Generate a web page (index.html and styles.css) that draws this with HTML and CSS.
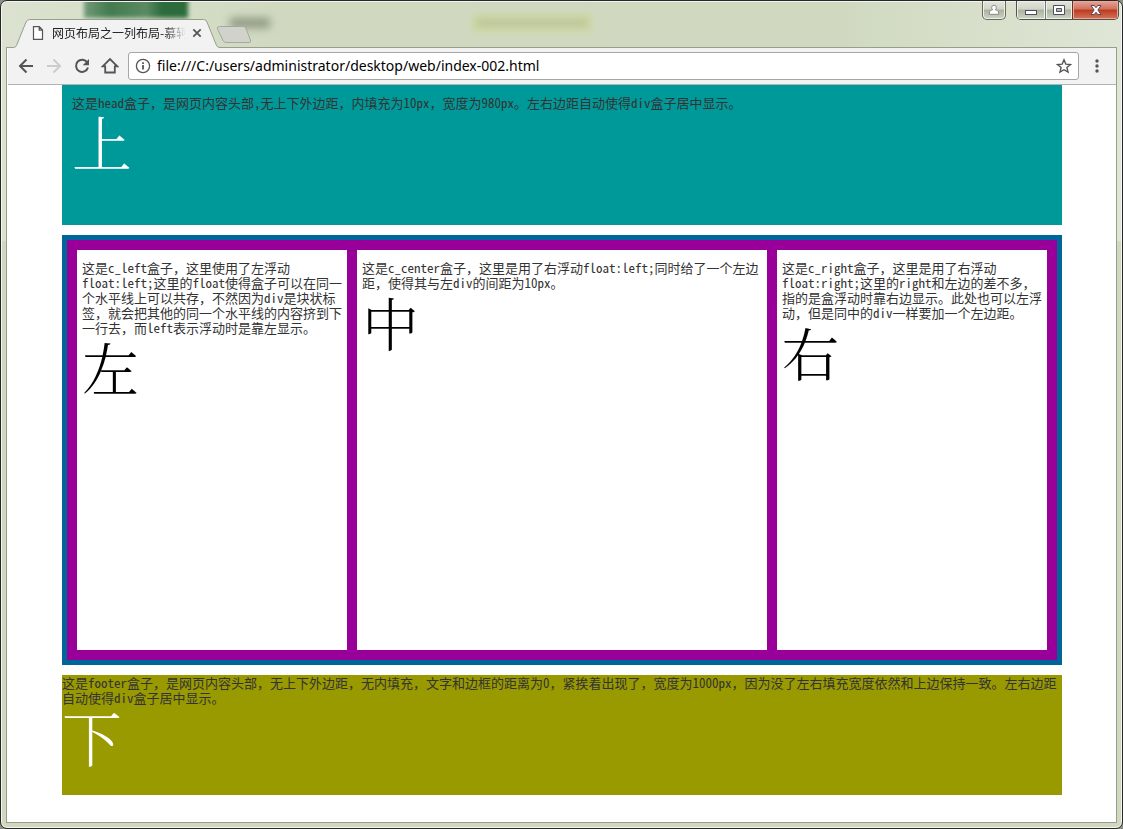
FILE: index.html
```html
<!DOCTYPE html>
<html lang="zh-CN">
<head>
<meta charset="utf-8">
<title>网页布局之一列布局</title>
<link rel="stylesheet" href="styles.css">
</head>
<body>
<div class="window">
  <div class="glass" aria-hidden="true">
    <span class="blur blur-green"></span>
    <span class="blur blur-dark"></span>
    <span class="blur blur-lime"></span>
  </div>

  <div class="controls">
    <button class="ctl ctl-user" aria-label="用户">
      <svg width="12" height="12" viewBox="0 0 12 12"><path d="M6 1.2a2.3 2.3 0 0 1 2.3 2.4c0 1-.5 1.8-1 2.2 1.800.4 3.400 1.200 3.400 3.200v1.300H1.300V9c0-2 1.600-2.800 3.400-3.200-.5-.4-1-1.200-1-2.200A2.300 2.300 0 0 1 6 1.200z" fill="#fff" stroke="#777" stroke-width=".8"/></svg>
    </button>
    <div class="ctl-group">
      <button class="ctl ctl-min" aria-label="最小化">
        <svg width="14" height="12" viewBox="0 0 14 12"><rect x="1.500" y="6.500" width="11" height="4" fill="#fff" stroke="#4b4f60"/></svg>
      </button>
      <button class="ctl ctl-max" aria-label="最大化">
        <svg width="14" height="12" viewBox="0 0 14 12"><path d="M1.500 1.500h11v9h-11zM4.500 4.500v3h5v-3z" fill="#fff" fill-rule="evenodd" stroke="#4b4f60"/></svg>
      </button>
      <button class="ctl ctl-close" aria-label="关闭">
        <svg width="14" height="12" viewBox="0 0 14 12"><path d="M2 1.500h3.200L7 3.700l1.800-2.200H12L8.900 6l3.100 4.500H8.800L7 8.300l-1.800 2.200H2L5.100 6z" fill="#fff" stroke="#5a4650"/></svg>
      </button>
    </div>
  </div>

  <div class="tabs">
    <div class="tab">
      <svg class="tab-shape" viewBox="0 0 208 29" width="208" height="29"><path d="M0 28.500h1.500q2 0 3-2L14 3q1.300-2.500 3.500-2.500h174Q194 .5 195 3l9.500 23.500q1 2 3.500 2V29H0z" fill="#f2f2f2"/><path d="M0 28.500h1.500q2 0 3-2L14 3q1.300-2.500 3.500-2.500h174Q194 .5 195 3l9.500 23.500q1 2 3.500 2" fill="none" stroke="#979e8c"/></svg>
      <svg class="tab-file" width="12" height="14" viewBox="0 0 12 14"><path d="M1.500 .7h5.800l3.200 3.300v9.300h-9zM7.200 .7v3.400h3.300" fill="#fff" stroke="#555" stroke-width="1.200"/></svg>
      <span class="tab-title">网页布局之一列布局-慕轲</span>
      <button class="tab-close" aria-label="关闭标签页"><svg width="10" height="10" viewBox="0 0 10 10"><path d="M1.300 1.300l7.400 7.400M8.700 1.300L1.300 8.700" stroke="#555" stroke-width="1.800"/></svg></button>
    </div>
    <button class="new-tab" aria-label="新标签页"><svg width="36" height="18" viewBox="0 0 36 18"><path d="M3.500 .5h23.500q2 0 3 2l4.500 11.500q.8 2.500-1.500 2.500H10q-2 0-3-2L1.500 3Q.5 .5 3.500 .5z" fill="#d0d2cb" stroke="#a3aa98"/></svg></button>
  </div>

  <div class="frame">
    <div class="toolbar">
      <button class="tool" aria-label="后退"><svg width="16" height="16" viewBox="0 0 16 16"><path d="M8.500 1.500L2 8l6.500 6.500M2 8h13" fill="none" stroke="#555" stroke-width="2"/></svg></button>
      <button class="tool" aria-label="前进" disabled><svg width="16" height="16" viewBox="0 0 16 16"><path d="M7.500 1.500L14 8l-6.500 6.500M14 8H1" fill="none" stroke="#ccc" stroke-width="2"/></svg></button>
      <button class="tool" aria-label="刷新"><svg width="16" height="16" viewBox="0 0 16 16"><path d="M13.300 4.500A6.100 6.100 0 1 0 14 9.500" fill="none" stroke="#555" stroke-width="2"/><path d="M15 1v6.300H8.700z" fill="#555"/></svg></button>
      <button class="tool" aria-label="主页"><svg width="18" height="18" viewBox="0 0 18 18"><path d="M1.700 9.300L9 2l7.300 7.300h-2.500v6.200H4.200V9.300z" fill="none" stroke="#555" stroke-width="1.800"/></svg></button>
      <div class="omnibox">
        <svg width="16" height="16" viewBox="0 0 16 16"><circle cx="8" cy="8" r="6.600" fill="none" stroke="#555" stroke-width="1.300"/><path d="M8 7v4.500M8 4.200v1.800" stroke="#555" stroke-width="1.800"/></svg>
        <input class="address" type="text" aria-label="地址" value="file:///C:/users/administrator/desktop/web/index-002.html">
        <button class="star" aria-label="收藏"><svg width="16" height="16" viewBox="0 0 16 16"><path d="M8 1.800l1.800 4.300 4.700.4-3.600 3 1.100 4.600L8 11.700l-4 2.400 1.100-4.600-3.600-3 4.700-.4z" fill="none" stroke="#555" stroke-width="1.400"/></svg></button>
      </div>
      <button class="tool" aria-label="菜单"><svg width="4" height="14" viewBox="0 0 4 14"><g fill="#555"><circle cx="2" cy="2" r="1.700"/><circle cx="2" cy="7" r="1.700"/><circle cx="2" cy="12" r="1.700"/></g></svg></button>
    </div>

    <main class="page">
      <header class="head">
        <p>这是head盒子，是网页内容头部,无上下外边距，内填充为10px，宽度为980px。左右边距自动使得div盒子居中显示。</p>
        <p class="big">上</p>
      </header>
      <section class="content">
        <div class="col">
          <p>这是c_left盒子，这里使用了左浮动<br>float:left;这里的float使得盒子可以在同一个水平线上可以共存，不然因为div是块状标签，就会把其他的同一个水平线的内容挤到下一行去，而left表示浮动时是靠左显示。</p>
          <p class="big">左</p>
        </div>
        <div class="col">
          <p>这是c_center盒子，这里是用了右浮动float:left;同时给了一个左边距，使得其与左div的间距为10px。</p>
          <p class="big">中</p>
        </div>
        <div class="col">
          <p>这是c_right盒子，这里是用了右浮动<br>float:right;这里的right和左边的差不多，指的是盒浮动时靠右边显示。此处也可以左浮动，但是同中的div一样要加一个左边距。</p>
          <p class="big">右</p>
        </div>
      </section>
      <footer class="footer">
        <p>这是footer盒子，是网页内容头部，无上下外边距，无内填充，文字和边框的距离为0，紧挨着出现了，宽度为1000px，因为没了左右填充宽度依然和上边保持一致。左右边距自动使得div盒子居中显示。</p>
        <p class="big">下</p>
      </footer>
    </main>
  </div>
</div>
</body>
</html>
```

FILE: styles.css
```css
* {
  box-sizing: border-box;
}

body {
  margin: 0;
  background: #8a8f86;
  color: #333;
  font: 13px/15px "Noto Sans Mono CJK SC", "Noto Sans CJK SC", sans-serif;
}

p {
  margin: 0;
}

button {
  display: flex;
  align-items: center;
  justify-content: center;
  padding: 0;
  border: 0;
  background: none;
}

svg {
  flex: none;
}

/* Window frame */
.window {
  position: relative;
  display: flex;
  flex-direction: column;
  min-height: 100vh;
  padding: 0 6px 5px 5px;
  border: 1px solid #25272a;
  border-radius: 7px;
  background: linear-gradient(90deg, #dbe3d0, #d0d9c0 25%, #d0d9c0 75%, #dfe6d6) top / 100% 240px no-repeat, #d0d9c0;
  box-shadow: inset 0 0 0 1px #f3f6ee;
}

.glass {
  position: absolute;
  inset: 1px 1px auto;
  height: 46px;
  overflow: hidden;
}

.blur {
  position: absolute;
  filter: blur(2px);
}

.blur-green {
  left: 82px;
  top: -4px;
  width: 104px;
  height: 20px;
  background: linear-gradient(90deg, #729a78, #427b4e 25%, #5b8b63 60%, #2c6b3b 75%);
}

.blur-dark {
  left: 228px;
  top: 16px;
  width: 40px;
  height: 10px;
  background: #8d9781;
  filter: blur(4px);
}

.blur-lime {
  left: 470px;
  top: 12px;
  width: 120px;
  height: 18px;
  background: linear-gradient(#bac49b, #bac49b) center / 108px 6px no-repeat, #cbd6a2;
  filter: blur(3px);
}

.controls {
  position: absolute;
  top: 0;
  right: 3px;
  display: flex;
  gap: 10px;
}

.ctl {
  height: 18px;
  background: linear-gradient(#e2e6dc, #cfd5c6 45%, #a9b19f 50%, #cdd4c4);
  box-shadow: inset 0 0 0 1px #eef1ea;
}

.ctl-user {
  width: 24px;
  height: 19px;
  border: 1px solid #666a62;
  border-top: 0;
  border-radius: 0 0 5px 5px;
}

.ctl-group {
  display: flex;
  overflow: hidden;
  height: 19px;
  border: 1px solid #4e514c;
  border-top: 0;
  border-radius: 0 0 5px 5px;
}

.ctl-min {
  width: 28px;
}

.ctl-max {
  width: 27px;
  border-left: 1px solid #777b74;
}

.ctl-close {
  width: 46px;
  border-left: 1px solid #6b3327;
  background: linear-gradient(#e4a598, #d3705b 45%, #b93b20 50%, #d8735a);
  box-shadow: inset 0 0 0 1px #eba896;
}

/* Tab strip */
.tabs {
  position: relative;
  display: flex;
  align-items: flex-end;
  height: 46px;
  padding-left: 6px;
}

.tab {
  position: relative;
  z-index: 1;
  display: flex;
  align-items: center;
  width: 208px;
  height: 28px;
  padding: 0 16px 0 20px;
}

.tab-shape {
  position: absolute;
  left: 0;
  top: 0;
}

.tab-file,
.tab-title,
.tab-close {
  position: relative;
}

.tab-title {
  flex: 1;
  overflow: hidden;
  margin: 0 4px 0 8px;
  color: #222;
  font-family: "Noto Sans CJK SC", sans-serif;
  font-size: 12px;
  line-height: 20px;
  white-space: nowrap;
  -webkit-mask-image: linear-gradient(90deg, #000 112px, transparent 134px);
  mask-image: linear-gradient(90deg, #000 112px, transparent 134px);
}

.tab-close {
  width: 14px;
  height: 14px;
}

.new-tab {
  align-self: flex-end;
  margin: 0 0 3px -4px;
}

.frame {
  position: relative;
  display: flex;
  flex: 1;
  flex-direction: column;
  padding-left: 1px;
  border: 1px solid #979e8c;
  border-right: 0;
  background: #fff;
  box-shadow: 1px 0 0 #979e8c;
}

.toolbar {
  display: flex;
  align-items: center;
  height: 37px;
  padding: 0 5px 0 4px;
  border-bottom: 1px solid #b3b3b3;
  background: #f2f2f2;
}

.tool {
  width: 28px;
  height: 28px;
}

.omnibox {
  display: flex;
  flex: 1;
  align-items: center;
  height: 28px;
  margin: 0 4px;
  padding: 0 6px;
  border: 1px solid #a6a6a6;
  border-radius: 3px;
  background: #fff;
}

.address {
  flex: 1;
  min-width: 0;
  padding: 0 6px;
  border: 0;
  outline: 0;
  background: none;
  color: #000;
  font: 14px/20px "Noto Sans", "Open Sans", sans-serif;
}

/* Page content */
.page {
  display: flex;
  flex-direction: column;
  gap: 10px;
  width: 100%;
  max-width: 1000px;
  margin: 0 auto;
}

.big {
  color: #fff;
  font-family: "Noto Serif CJK SC", "Noto Sans CJK SC", serif;
  font-size: 60px;
  font-weight: 300;
  line-height: 62px;
}

.head {
  min-height: 140px;
  padding: 10px;
  background: #099;
}

.content {
  display: grid;
  grid-template-columns: 27fr 41fr 27fr;
  gap: 10px;
  min-height: 430px;
  padding: 10px;
  border: 5px solid #069;
  background: #909;
}

.col {
  padding: 10px 5px;
  background: #fff;
}

.col .big {
  color: #000;
  font-size: 57px;
}

.footer {
  min-height: 120px;
  background: #990;
}
```
